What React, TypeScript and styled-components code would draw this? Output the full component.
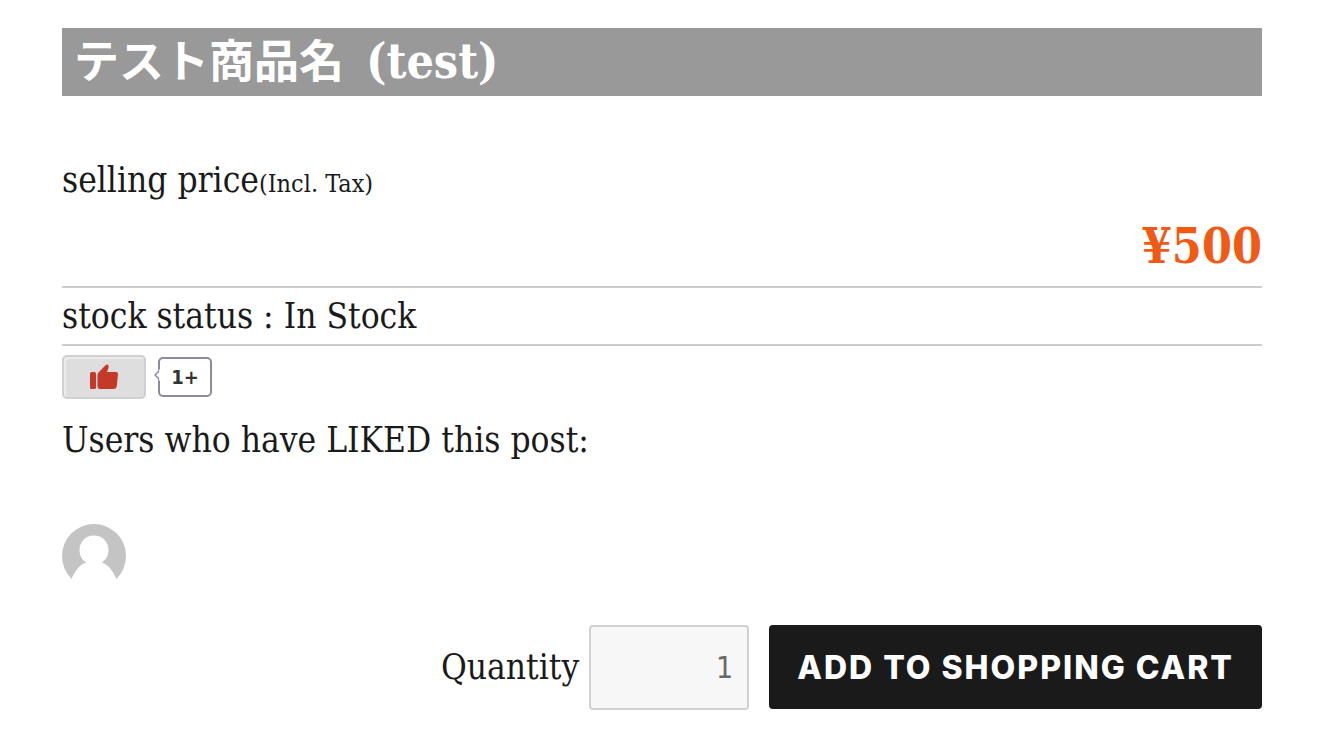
import React, { useState } from "react";
import styled, { createGlobalStyle } from "styled-components";

const serif = `"DejaVu Serif Condensed", "DejaVu Serif", "Noto Sans CJK JP", serif`;
const sans = `"DejaVu Sans Condensed", "DejaVu Sans", sans-serif`;

const GlobalStyle = createGlobalStyle`
  *, *::before, *::after { box-sizing: border-box; }
  body {
    margin: 0;
    background: #fff;
    color: #1a1a1a;
    font-family: ${serif};
    font-stretch: condensed;
    font-size: 35px;
    line-height: 56px;
  }
`;

const Page = styled.main`
  padding: 28px 70px 40px 62px;
`;

const Title = styled.h1`
  margin: 0 0 56px;
  padding: 0 12px;
  background: #999;
  color: #fff;
  font-size: 45px;
  font-weight: 700;
  line-height: 66px;
`;

const Latin = styled.span`
  margin-left: 22px;
  font-size: 48px;
`;

const PriceBlock = styled.section`
  border-bottom: 2px solid #ccc;
`;

const Text = styled.p`
  margin: 0;
`;

const TaxNote = styled.small`
  font-size: 25px;
`;

const Price = styled.p`
  margin: 0;
  padding-bottom: 6px;
  color: #f15a14;
  font-size: 48px;
  font-weight: 700;
  line-height: 68px;
  text-align: right;
`;

const Stock = styled.p`
  margin: 0;
  border-bottom: 2px solid #ccc;
`;

const LikeRow = styled.div`
  display: flex;
  align-items: center;
  gap: 12px;
  padding: 9px 0 13px;
`;

const LikeButton = styled.button`
  display: flex;
  align-items: center;
  justify-content: center;
  width: 84px;
  height: 44px;
  padding: 0;
  border: 2px solid #d0d0d0;
  border-radius: 5px;
  background: #dedede;
  box-shadow: inset 2px 2px 0 #ebebeb;
  cursor: pointer;
`;

const Counter = styled.span`
  position: relative;
  display: flex;
  align-items: center;
  justify-content: center;
  width: 54px;
  height: 40px;
  border: 2px solid #8a8c9e;
  border-radius: 5px;
  background: #fff;
  color: #333;
  font-family: ${sans};
  font-size: 20px;
  font-weight: 700;
  line-height: 32px;
`;

const Pointer = styled.svg`
  position: absolute;
  left: -6px;
  top: 10px;
`;

const Likers = styled.ul`
  display: flex;
  gap: 8px;
  margin: 56px 0 37px;
  padding: 0;
  list-style: none;
  line-height: 0;
`;

const CartForm = styled.form`
  display: flex;
  align-items: flex-start;
  justify-content: flex-end;
`;

const QuantityLabel = styled.label`
  margin-right: 10px;
  line-height: 84px;
`;

const QuantityInput = styled.input`
  width: 160px;
  height: 85px;
  margin-right: 20px;
  padding: 0 14px;
  border: 2px solid #d1d1d1;
  border-radius: 4px;
  background: #f7f7f7;
  color: #686868;
  font-family: ${sans};
  font-stretch: condensed;
  font-size: 30px;
  text-align: right;
`;

const CartButton = styled.button`
  height: 84px;
  padding: 0 28px;
  border: 0;
  border-radius: 4px;
  background: #1a1a1a;
  color: #fff;
  font-family: Inter, sans-serif;
  font-size: 32px;
  font-weight: 800;
  letter-spacing: 2px;
  text-transform: uppercase;
  white-space: nowrap;
  cursor: pointer;
`;

function ThumbUp() {
  return (
    <svg width="30" height="26" viewBox="0 0 30 26" fill="#c5392b" aria-hidden="true">
      <rect x="1" y="8" width="6" height="17" rx="1.5" />
      <path d="M8.5 11 Q8.5 9.2 10 8 L15 2.8 L17.2 0.8 Q19 0 19.6 2 Q19.8 3.2 19.3 4.5 L18 8 H27 Q29 8 29 10.2 L27.8 22 Q27.3 25 24.5 25 H11 Q8.5 25 8.5 22 Z" />
    </svg>
  );
}

function Avatar() {
  return (
    <svg width="64" height="64" viewBox="0 0 64 64" role="img" aria-label="User">
      <circle cx="32" cy="32" r="32" fill="#c4c4c4" />
      <path
        d="M0 64 L9.5 55 C13 47 18 40 24.5 38.5 C20 36 17.5 31.5 17.5 26 C17.5 17.5 24 11.5 32 11.5 C40 11.5 46.5 17.5 46.5 26 C46.5 31.5 44 36 39.5 38.5 C46 40 51 47 54.5 55 L64 64 Z"
        fill="#fff"
      />
    </svg>
  );
}

export default function App() {
  const [quantity, setQuantity] = useState("1");
  return (
    <>
      <GlobalStyle />
      <Page>
        <Title>
          テスト商品名<Latin>(test)</Latin>
        </Title>
        <PriceBlock>
          <Text>
            selling price<TaxNote>(Incl. Tax)</TaxNote>
          </Text>
          <Price>¥500</Price>
        </PriceBlock>
        <Stock>stock status : In Stock</Stock>
        <LikeRow>
          <LikeButton type="button" aria-label="Like">
            <ThumbUp />
          </LikeButton>
          <Counter>
            <Pointer width="6" height="12" viewBox="0 0 6 12" aria-hidden="true">
              <path d="M6 0 V12 L1 6 Z" fill="#fff" />
              <path d="M5 2 L1 6 L5 10" fill="none" stroke="#8a8c9e" strokeWidth="1.5" />
            </Pointer>
            1+
          </Counter>
        </LikeRow>
        <Text>Users who have LIKED this post:</Text>
        <Likers>
          <li>
            <Avatar />
          </li>
        </Likers>
        <CartForm onSubmit={(event) => event.preventDefault()}>
          <QuantityLabel htmlFor="quantity">Quantity</QuantityLabel>
          <QuantityInput
            id="quantity"
            type="text"
            inputMode="numeric"
            value={quantity}
            onChange={(event) => setQuantity(event.target.value)}
          />
          <CartButton type="submit">Add to shopping cart</CartButton>
        </CartForm>
      </Page>
    </>
  );
}
